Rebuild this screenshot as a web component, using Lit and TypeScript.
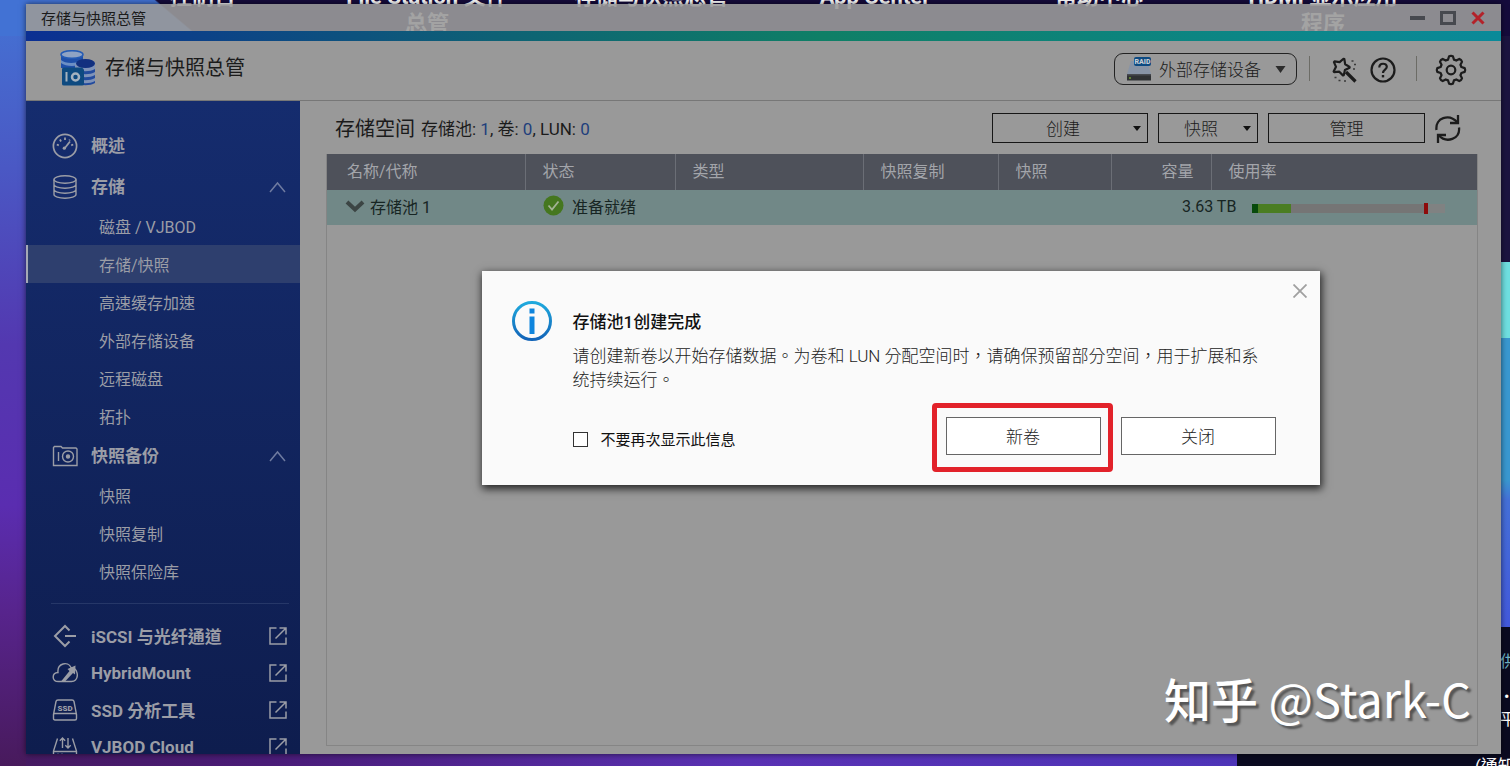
import { LitElement, html, css, svg, nothing } from "lit";
import { customElement, property } from "lit/decorators.js";
import { classMap } from "lit/directives/class-map.js";

const resets = css`
  *, *::before, *::after { box-sizing: border-box; }
  button { font: inherit; color: inherit; background: none; border: 0; padding: 0; margin: 0; cursor: pointer; }
  a { color: inherit; text-decoration: none; }
  svg { display: block; flex: none; }
`;

const icons = {
  gauge: svg`<circle cx="13" cy="13" r="11.6" stroke-width="1.7"/><path d="M12.5 15.5 18 8.5" stroke-width="1.8"/><circle cx="12.3" cy="15.2" r="1.6" fill="currentColor" stroke="none"/><path d="M13 4.5v2.6M8 6.5l1 2M4.8 11.5l2 .8M21.2 11.5l-2 .8M17.8 6.6l-.5.9" stroke-width="1.8"/>`,
  disks: svg`<ellipse cx="13" cy="5.5" rx="11" ry="3.7"/><path d="M2 5.500v15c0 2 5 3.700 11 3.700s11-1.700 11-3.700v-15M2 10.500c0 2 5 3.700 11 3.700s11-1.700 11-3.700M2 15.500c0 2 5 3.700 11 3.700s11-1.700 11-3.700"/>`,
  camera: svg`<path d="M1.500 22.500V4.500l1-1H9l1.500 1.500h13.500l1 1v16.500z"/><path d="M6.500 9v9"/><circle cx="16" cy="13.500" r="5.500"/><circle cx="16" cy="13.500" r="1.500" fill="currentColor"/>`,
  iscsi: svg`<path d="M17.500 7.500 13 3 3 13l10 10 4.500-4.500M13 13h11" stroke-width="2"/>`,
  cloud: svg`<path d="M6.500 21.500c-7 0-7-8.500-.5-9C5 3 16 1 19 7.500c7 .5 7.500 9.500 4.500 12.500-1 1-2 1.500-4 1.500z"/><path d="M9 21.500 17.500 11 15.500 9l8-3.500-.5 9-2-1.500-8 8.500z" fill="currentColor" stroke="none"/>`,
  ssd: svg`<path d="M1.500 17.500 4 4.500q.3-1.500 2-1.500h14q1.700 0 2 1.500l2.500 13v4q0 1.500-1.500 1.500H3q-1.500 0-1.500-1.500zq0-1 1.500-1h20q1.500 0 1.500 1"/><text x="13" y="13.500" text-anchor="middle" font-family="Roboto, sans-serif" font-size="8" font-weight="900" fill="currentColor" stroke="none">SSD</text>`,
  vjbod: svg`<path d="M5.500 4.500 1.500 17v6h23v-6l-4-12.500M1.500 17.500h23M5 20.500h2M9 20.500h2M10.500 14V4M7.800 6.700 10.500 4l2.700 2.700M16 4v10M13.300 11.300 16 14l2.700-2.700"/>`,
};

/** Closed outline through polar points around a centre; angles are in degrees, 0 at the top. */
const polar = (cx: number, cy: number, points: [number, number][]) =>
  "M" + points.map(([deg, r]) => {
    const a = (deg * Math.PI) / 180;
    return `${(cx + r * Math.sin(a)).toFixed(2)} ${(cy - r * Math.cos(a)).toFixed(2)}`;
  }).join("L") + "z";

const gearPath = polar(16, 16, Array.from({ length: 8 }, (_, i) => i * 45)
  .flatMap((d): [number, number][] => [[d - 16, 10.8], [d - 8, 13.800], [d, 14.200], [d + 8, 13.800], [d + 16, 10.800]]));
const starPath = polar(11, 11, Array.from({ length: 5 }, (_, i) => i * 72 + 20)
  .flatMap((d): [number, number][] => [[d - 3, 8.600], [d + 3, 8.600], [d + 36, 5]]));

interface Entry { label: string; icon?: keyof typeof icons; children?: string[]; active?: string; }

const sections: Entry[] = [
  { label: "概述", icon: "gauge" },
  { label: "存储", icon: "disks", active: "存储/快照", children: ["磁盘 / VJBOD", "存储/快照", "高速缓存加速", "外部存储设备", "远程磁盘", "拓扑"] },
  { label: "快照备份", icon: "camera", children: ["快照", "快照复制", "快照保险库"] },
];
const tools: Entry[] = [
  { label: "iSCSI 与光纤通道", icon: "iscsi" },
  { label: "HybridMount", icon: "cloud" },
  { label: "SSD 分析工具", icon: "ssd" },
  { label: "VJBOD Cloud", icon: "vjbod" },
];

const glyph = (name: keyof typeof icons) => html`<svg width="26" height="26" viewBox="0 0 26 26" fill="none" stroke="currentColor" stroke-width="1.400" aria-hidden="true">${icons[name]}</svg>`;

@customElement("side-nav")
class SideNav extends LitElement {
  static styles = [resets, css`
    :host { display: block; overflow: hidden; color: #9b9da6; padding-top: 24px;
      background: linear-gradient(#152c6e, #0e1d4e); }
    .row { display: flex; align-items: center; width: 100%; height: 41px; padding: 0 14px 0 26px; gap: 13px; font-size: 17px; font-weight: 700; text-align: left; }
    .row .name { flex: 1; white-space: nowrap; padding-bottom: 2px; }
    ul { list-style: none; margin: 0; padding: 0; }
    .sub { display: flex; align-items: center; height: 38px; padding-left: 73px; font-size: 16px; font-weight: 400; }
    .sub.active { background: #2e3f6e; box-shadow: inset 2px 0 #a5a9b5; }
    .rule { height: 1px; border: 0; margin: 13px 11px 13px 25px; background: #263768; }
    .tool { height: 37px; }
    .tool .name { padding-bottom: 0; }
    .ext { margin-right: -2px; }
  `];
  render() {
    return html`
      <nav>
        ${sections.map((s) => html`
          <button class="row">${glyph(s.icon!)}<span class="name">${s.label}</span>
            ${s.children ? html`<svg class="chev" width="17" height="12" viewBox="0 0 17 12" fill="none" stroke="#6f7ba0" stroke-width="1.500"><path d="m1 11 7.500-9L16 11"/></svg>` : nothing}
          </button>
          ${s.children ? html`<ul>${s.children.map((c) => html`<li><a href="#" class=${classMap({ sub: true, active: c === s.active })}>${c}</a></li>`)}</ul>` : nothing}
        `)}
        <hr class="rule">
        ${tools.map((t) => html`
          <a href="#" class="row tool">${glyph(t.icon!)}<span class="name">${t.label}</span>
            <svg class="ext" width="20" height="20" viewBox="0 0 20 20" fill="none" stroke="currentColor" stroke-width="1.500"><path d="M8.500 2H2v16h16v-6.500M11.500 2H18v6.500M7.500 12.500 18 2"/></svg>
          </a>`)}
      </nav>`;
  }
}

@customElement("pool-table")
class PoolTable extends LitElement {
  @property({ type: Number }) used = 20;
  @property({ type: Number }) threshold = 90;
  static styles = [resets, css`
    :host { display: block; border: 1px solid #858585; border-top: 0; }
    table { width: 100%; table-layout: fixed; border-collapse: collapse; font-size: 16px; }
    th { height: 36px; padding: 0 17px 4px; text-align: left; font-weight: 400; color: #a3a5aa; background: #4e515a; border-left: 1px solid #6b6e76; }
    th:first-child { border-left: 0; padding-left: 20px; }
    th.num { text-align: right; }
    td { height: 35px; padding: 0 17px 4px; background: #718887; color: #172523; white-space: nowrap; }
    .c1 { width: 198px; } .c2 { width: 150px; } .c3 { width: 188px; } .c4 { width: 135px; } .c5 { width: 113px; } .c6 { width: 100px; }
    .flex { display: flex; align-items: center; gap: 8px; margin-left: 1px; }
    .name { gap: 5px; }
    td.cap { padding-left: 71px; padding-bottom: 2px; }
    td.use { padding-left: 41px; padding-right: 32px; padding-bottom: 0; }
    .bar { position: relative; height: 9px; margin-top: 2px; background: linear-gradient(90deg, #757575 90%, #808282 90%); }
    .fill { height: 9px; background: #4a7d22; border-left: 6px solid #084a0c; }
    .mark { position: absolute; top: -1px; width: 4px; height: 11px; background: #8d0b0b; }
  `];
  render() {
    return html`
      <table>
        <colgroup><col class="c1"><col class="c2"><col class="c3"><col class="c4"><col class="c5"><col class="c6"><col></colgroup>
        <thead><tr><th>名称/代称</th><th>状态</th><th>类型</th><th>快照复制</th><th>快照</th><th class="num">容量</th><th>使用率</th></tr></thead>
        <tbody><tr>
          <td><div class="flex name"><svg width="20" height="14" viewBox="0 0 20 14" fill="none" stroke="#3c4544" stroke-width="4"><path d="m2 3 8 7.500L18 3"/></svg>存储池 1</div></td>
          <td><div class="flex"><svg width="21" height="21" viewBox="0 0 21 21"><circle cx="10.500" cy="10.500" r="10" fill="#45771f"/><path d="m5.500 10.500 3.500 4 6.500-8" fill="none" stroke="#a3b295" stroke-width="1.800"/></svg>准备就绪</div></td>
          <td></td><td></td><td></td>
          <td class="cap">3.63 TB</td>
          <td class="use"><div class="bar"><div class="fill" style="width:${this.used}%"></div><div class="mark" style="left:${this.threshold - 1}%"></div></div></td>
        </tr></tbody>
      </table>`;
  }
}

@customElement("pool-dialog")
class PoolDialog extends LitElement {
  static styles = [resets, css`
    :host { display: grid; grid-template-columns: 40px 1fr; column-gap: 21px; position: relative; width: 838px; padding: 30px 44px 30px 30px;
      background: #fafafa; color: #111; box-shadow: 1px 3px 8px 1px rgba(0,0,0,.75); }
    h2 { margin: 9px 0 10px; font-size: 17px; line-height: 24px; font-weight: 500; }
    p { margin: 0; padding-right: 12px; font-size: 17px; line-height: 24px; font-weight: 300; color: #222; }
    .foot { display: flex; align-items: center; gap: 20px; margin-top: 25px; }
    label { display: flex; align-items: center; gap: 13px; flex: 1; font-size: 15px; padding-top: 4px; }
    input { appearance: none; width: 15px; height: 15px; margin: 2px 0 0; border: 1px solid #333; background: #fff; }
    .btn { width: 155px; height: 38px; border: 1px solid #666; background: #fff; font-size: 17px; font-weight: 300; color: #222; padding-bottom: 2px; }
    .main { position: relative; }
    .main::after { content: ""; position: absolute; inset: -15px -13px -18px -15px; border: 5px solid #e2222a; border-radius: 4px; pointer-events: none; }
    .close { position: absolute; top: 13px; right: 13px; }
  `];
  render() {
    return html`
      <svg width="40" height="40" viewBox="0 0 40 40"><defs><linearGradient id="g" x2="0" y2="1"><stop stop-color="#1fa9dd"/><stop offset="1" stop-color="#1264b8"/></linearGradient></defs>
        <circle cx="20" cy="20" r="18.500" fill="none" stroke="url(#g)" stroke-width="3"/><path d="M17.500 7.500h5v5h-5zM17.500 15.500h5v17.500h-5z" fill="#0f85dd"/></svg>
      <div>
        <h2>存储池1创建完成</h2>
        <p>请创建新卷以开始存储数据。为卷和 LUN 分配空间时，请确保预留部分空间，用于扩展和系统持续运行。</p>
        <div class="foot">
          <label><input type="checkbox">不要再次显示此信息</label>
          <button class="btn main">新卷</button>
          <button class="btn">关闭</button>
        </div>
      </div>
      <button class="close" aria-label="关闭"><svg width="14" height="14" viewBox="0 0 14 14" stroke="#a0a0a0" stroke-width="1.800"><path d="m.5.500 13 13m0-13-13 13"/></svg></button>`;
  }
}

const shortcuts = [["控制台"], ["File Station 文件", "总管"], ["存储与快照总管"], ["App Center"], ["帮助中心"], ["HDMI 显示应用", "程序"]];
const caret = html`<svg width="8" height="5" viewBox="0 0 8 5"><path d="M0 0h8L4 5z" fill="#111"/></svg>`;

@customElement("app-root")
class AppRoot extends LitElement {
  static styles = [resets, css`
    :host { display: block; position: relative; height: 100vh; overflow: hidden; background: #0a0a20;
      font-family: Roboto, "Noto Sans CJK TC", "Noto Sans CJK SC", sans-serif; color: #1b1b1b; }
    .wall { position: absolute; inset: 0; background:
      linear-gradient(40deg, #4272d4 0, #4272d4 81%, #150b3c 82%) 0 0 / 200px 36px no-repeat,
      linear-gradient(#4473d4 0, #4a58c4 22%, #5338b0 45%, #5a2db0 66%, #57248c 80%, #481a5c 100%) 0 0 / 26px 100% no-repeat,
      linear-gradient(90deg, #461a60 0, #4a1c78 22%, #5a32b4 60%, #4e35b8 100%) 0 100% / 1237px 12px no-repeat,
      linear-gradient(#150b3c, #150b3c) 0 0 / 100% 36px no-repeat,
      linear-gradient(#1c1440 0 262px, #6fdfe0 262px 338px, #3a98d0 338px 480px, #4570d8 500px, #4359dc 627px, #0a0a20 627px) 100% 0 / 12px 100% no-repeat; }
    .icons { position: absolute; top: -17px; left: 91px; display: flex; }
    .icons a { width: 224px; text-align: center; color: #fff; font-size: 22px; line-height: 27px; font-weight: 700; white-space: nowrap; }
    .icons span { display: block; }
    .side { position: absolute; left: 1500px; top: 650px; width: 60px; color: #fff; font-size: 16px; line-height: 24px; white-space: nowrap; }
    .side .more { color: #6fb3c4; }
    .side div { height: 24px; }
    .side .dot { height: 34px; padding: 14px 0 0 4px; line-height: 18px; }
    .note { position: absolute; left: 1475px; top: 756px; color: #fff; font-size: 17px; line-height: 20px; white-space: nowrap; }
    .window { position: absolute; inset: 4px 9px 12px 26px; display: grid; grid-template: auto auto 1fr / 274px 1fr; box-shadow: 0 0 6px rgba(0,0,0,.6); }
    .title { grid-column: 1 / 3; display: flex; align-items: center; height: 27px; padding: 0 16px 0 15px; font-size: 15px; background: rgba(153,153,153,.9); }
    .title span { flex: 1; padding-bottom: 1px; }
    .title button + button { margin-left: 15px; }
    header { grid-column: 1 / 3; display: flex; align-items: center; height: 70px; padding: 10px 34px 2px 34px; border-bottom: 1px solid #777;
      background: linear-gradient(90deg, #0b2f92 0, #0e6374 33%, #0f7f66 54%, #0a8a99 100%) 0 0 / 100% 10px no-repeat, #999; }
    .logo { margin-bottom: 4px; }
    h1 { flex: 1; margin: 0 0 6px 9px; font-size: 20px; font-weight: 400; }
    .device { display: flex; align-items: center; gap: 7px; width: 183px; height: 32px; margin-bottom: 1px; padding: 0 10px 0 11px; border: 1px solid #222; border-radius: 9px; font-size: 17px; font-weight: 300; }
    .device span { flex: 1; text-align: left; padding-bottom: 2px; }
    .bar { width: 1px; height: 25px; margin: 0 20px 3px 12px; background: #6c6c66; }
    .bar.last { margin: 0 18px 3px 20px; }
    .help { margin-left: 12px; }
    main { display: flex; flex-direction: column; min-width: 0; padding: 12px 23px 8px 26px; background: #999; }
    .tools { display: flex; align-items: center; gap: 10px; height: 30px; margin: 0 17px 11px 9px; }
    h3 { margin: 0; padding-bottom: 2px; font-size: 20px; font-weight: 400; }
    .counts { flex: 1; margin-left: -4px; padding-bottom: 2px; font-size: 17px; }
    .counts b { font-weight: 400; color: #1f3f7c; }
    .btn { display: flex; align-items: center; height: 30px; border: 1px solid #161616; font-size: 17px; font-weight: 300; padding: 0 6px; }
    .btn span { flex: 1; text-align: center; padding-bottom: 2px; }
    .w1 { width: 156px; padding-left: 0; } .w2 { width: 100px; padding-left: 0; } .w3 { width: 157px; }
    pool-table { flex: 1; }
    .layer { position: absolute; inset: 0 0 2px 274px; display: grid; place-items: center; }
    .mark { position: absolute; right: 39px; bottom: 33px; color: #fff; font: 400 47px/70px "Noto Sans CJK SC", sans-serif; text-shadow: 3px 3px 2px rgba(0,0,0,.45); white-space: nowrap; }
    .mark b { font-weight: 500; }
  `];
  render() {
    return html`
      <div class="wall"></div>
      <div class="icons">${shortcuts.map((lines) => html`<a href="#">${lines.map((l) => html`<span>${l}</span>`)}</a>`)}</div>
      <div class="side"><div class="more">供应</div><div class="dot">•</div><div>平台</div></div>
      <div class="note">(通知)</div>
      <div class="window">
        <div class="title"><span>存储与快照总管</span>
          <button aria-label="最小化"><svg width="15" height="14" viewBox="0 0 15 14"><path d="M0 5h15v4H0z" fill="#47494f"/></svg></button>
          <button aria-label="最大化"><svg width="16" height="14" viewBox="0 0 16 14"><path d="M1.500 1.500h13v11h-13z" fill="none" stroke="#47494f" stroke-width="3"/></svg></button>
          <button aria-label="关闭窗口"><svg width="14" height="14" viewBox="0 0 14 14" stroke="#b3222a" stroke-width="3"><path d="m1.500 1.500 11 11m0-11-11 11"/></svg></button>
        </div>
        <header>
          <svg class="logo" width="36" height="36" viewBox="0 0 36 36">
            <path d="M12 4 35 12v13H12z" fill="#8795ab"/>
            <path d="M1 4v14h22V4z" fill="#1f4fa8"/><ellipse cx="12" cy="4.500" rx="11" ry="3.800" fill="#8fa3c4" stroke="#245bb5" stroke-width="1.500"/><path d="M1 10c4 4 16 4 21 0v3c-4 4-16 4-21 0z" fill="#6c8fc4"/>
            <path d="M15 14v18c5 4 15 4 20 0V14z" fill="#7f93b8"/><ellipse cx="25.500" cy="13.500" rx="9.500" ry="4.500" fill="#12307f"/><path d="M16 19c5 3 14 3 19 0v3c-5 3-14 3-19 0zM16 25c5 3 14 3 19 0v3c-5 3-14 3-19 0zM16 31c5 3 14 3 19 0v2c-5 3-14 3-19 0z" fill="#234b9d"/>
            <path d="M2 19q0-1.500 2-1.500h18l2 2V34q0 1.500-2 1.500H4q-2 0-2-1.500z" fill="#0e4a80"/><path d="M6.500 22v9.500" stroke="#a5b2bf" stroke-width="2"/><circle cx="15.500" cy="27" r="3.500" fill="none" stroke="#a5b2bf" stroke-width="2.500"/>
          </svg>
          <h1>存储与快照总管</h1>
          <button class="device">
            <svg width="26" height="24" viewBox="0 0 26 24"><path d="M5 4h16l4 13H1z" fill="#8894a6"/><path d="M1 17h24v6.500H1z" fill="#303234"/><path d="M1 17h24v1.500H1z" fill="#484b50"/><circle cx="4" cy="21" r="1" fill="#6f9d33"/><rect x="8" y="0" width="17" height="9" rx="2" fill="#0d4a82"/><text x="16.500" y="7" text-anchor="middle" font-family="Roboto, sans-serif" font-size="7" font-weight="900" fill="#c4ccd4">RAID</text></svg>
            <span>外部存储设备</span>
            <svg width="11" height="7" viewBox="0 0 11 7"><path d="M.500 0h10l-5 7z" fill="#2c2c2c"/></svg>
          </button>
          <div class="bar"></div>
          <button aria-label="工具"><svg width="28" height="28" viewBox="0 0 28 28" fill="none" stroke="#1c1c1c" stroke-width="2.200"><path d=${starPath} stroke-linejoin="round"/><path d="m16 16 9.500 9.500" stroke-width="3.200"/><path d="M21.500 5h2M24 8.500h2M23 13h2M4.500 21.500h2M8.500 24.500h2M14 25h2" stroke="#3a3a3a" stroke-width="1.500"/></svg></button>
          <button class="help" aria-label="帮助"><svg width="26" height="28" viewBox="0 0 26 28" fill="none" stroke="#1c1c1c" stroke-width="2.200"><circle cx="13" cy="14" r="11.500"/><path d="M9.300 11.500c0-5 7.500-4.800 7.500-.7 0 2.800-3.800 2.900-3.800 6.200"/><path d="M13 19v2.400" stroke-width="2.400"/></svg></button>
          <div class="bar last"></div>
          <button aria-label="设置"><svg width="32" height="32" viewBox="0 0 32 32" fill="none" stroke="#1c1c1c" stroke-width="2.200" stroke-linejoin="round"><path d=${gearPath}/><circle cx="16" cy="16" r="4.300"/></svg></button>
        </header>
        <side-nav></side-nav>
        <main>
          <div class="tools">
            <h3>存储空间</h3>
            <div class="counts">存储池: <b>1</b>, 卷: <b>0</b>, LUN: <b>0</b></div>
            <button class="btn w1"><span>创建</span>${caret}</button>
            <button class="btn w2"><span>快照</span>${caret}</button>
            <button class="btn w3"><span>管理</span></button>
            <button aria-label="刷新"><svg width="26" height="30" viewBox="0 0 26 30" fill="none" stroke="#1c1c1c" stroke-width="2.300"><path d="M1.500 17C0 5 14 0 22.500 9.500M24 14.500C25.500 26 11.500 31 3.500 22"/><path d="M23 2v8h-8M3 30v-8h8"/></svg></button>
          </div>
          <pool-table></pool-table>
        </main>
        <div class="layer"><pool-dialog></pool-dialog></div>
      </div>
      <div class="mark"><b>知乎</b> @Stark-C</div>`;
  }
}
